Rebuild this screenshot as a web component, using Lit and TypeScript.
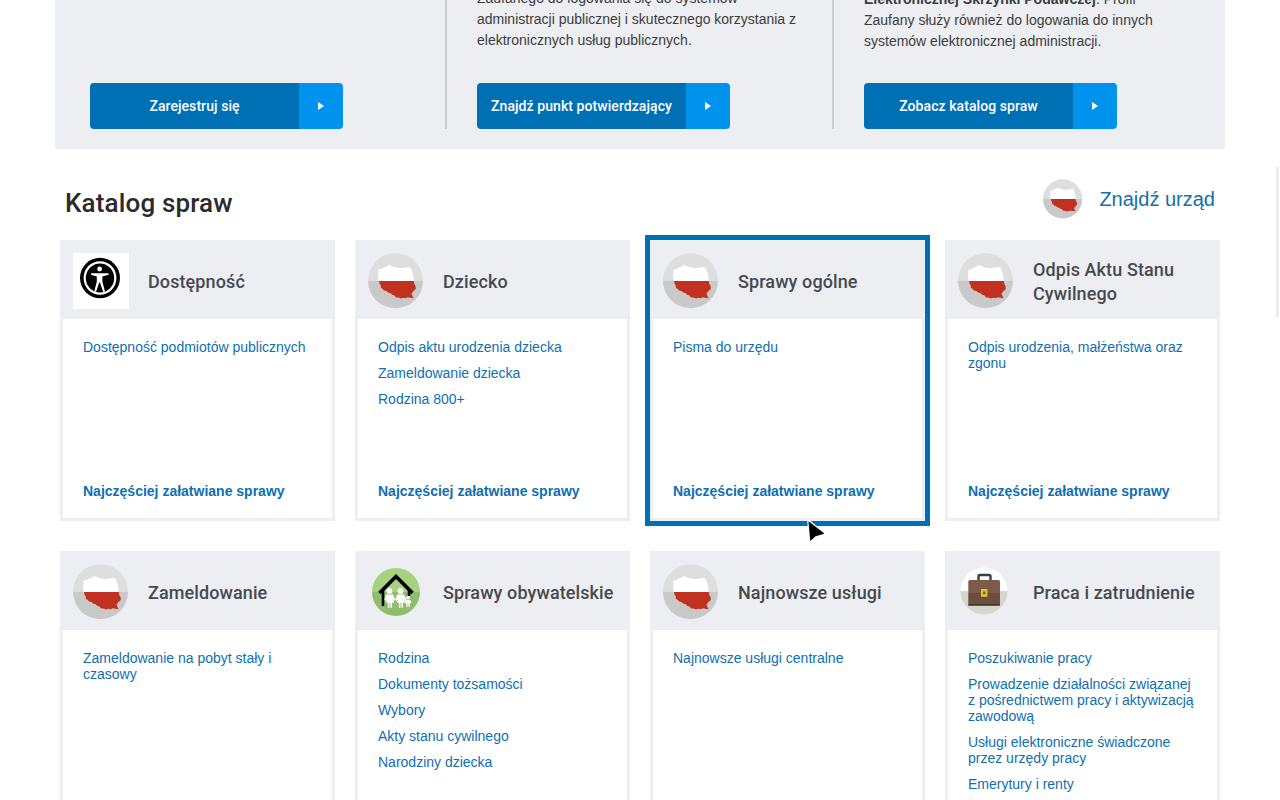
import { html, svg, css, LitElement } from "lit";
import { customElement } from "lit/decorators.js";

const polandIcon = () => html`
  <svg class="icon" viewBox="0 0 56 56">
    <path d="M0 27.700a27.500 27.500 0 0 1 55 0z" fill="#dedede" />
    <path d="M0 27.700a27.500 27.500 0 0 0 55 0z" fill="#c9c9c9" />
    <path
      fill="#fff"
      d="M10.300 16.700L13.500 16 15.500 14.800 18.500 13.500 21.300 12 23 12.800 25.300 14 28.500 14.600 32 15.300 35.500 14.700 39 14.200 42 14 43.400 17 44.600 20 45 23 45.600 25.500 45.800 28H11L10.300 25.500 9.900 23 10.400 20z"
    />
    <path
      fill="#c0321f"
      d="M11 28H45.800L46.300 31 47.600 33 47.800 36 45.500 38 43.500 40.500 44.500 43 45.500 45.300 42.500 44.800 39.500 44.200 38 45.200 35.500 44.800 33 45.600 30.500 44.600 28 44.600 26.500 42.400 24 41.800 22.800 40.200 20 39.400 18.500 38 16 37.400 14.500 35.800 13 35 12.600 32 11.500 30.500z"
    />
  </svg>
`;

const accessIcon = () => html`
  <svg class="icon" viewBox="0 0 56 56">
    <rect width="56" height="56" fill="#fff" />
    <ellipse cx="27" cy="25" rx="20" ry="20.300" fill="#000" />
    <ellipse cx="27" cy="25" rx="16.400" ry="16.800" fill="#fff" />
    <ellipse cx="27" cy="25" rx="14.200" ry="14.600" fill="#000" />
    <circle cx="26.600" cy="16" r="2.400" fill="#fff" />
    <path
      fill="#fff"
      d="M18 20.200h17.600v1.600l-6.200 1.600v5.400l2.600 9.800-1.800.4-3.200-9.400h-.8l-3.200 9.400-1.800-.4 2.600-9.800v-5.400L18 21.800z"
    />
  </svg>
`;

const familyIcon = () => html`
  <svg class="icon" viewBox="0 0 56 56">
    <path d="M4 28a24 24 0 0 1 48 0z" fill="#a6d17f" />
    <path d="M4 28a24 24 0 0 0 48 0z" fill="#8fbd6d" />
    <path d="M11.500 29L28 12.500 44.500 29" fill="none" stroke="#000" stroke-width="3.600" />
    <path d="M15 26v16M41 26v6" fill="none" stroke="#000" stroke-width="2.600" />
    ${[21.5, 32.5].map(
      (x) => svg`
        <circle cx=${x} cy="27" r="2.900" fill="#fff" />
        <path
          fill="#fff"
          d="M${x - 3.5} 30.500h7l2.600 5.500-1.600.8-1-2 1 4h-2v5h-1.500v-5h-1v5h-1.500v-5h-2l1-4-1 2-1.600-.8z"
        />
      `
    )}
    <circle cx="40" cy="33.500" r="1.800" fill="#fff" />
    <path fill="#fff" d="M37.800 35.800h4.400l1.400 3-1 .5-.8-1.300v5h-1.300v-3h-.9v3h-1.300v-5l-.8 1.300-1-.5z" />
  </svg>
`;

const caseIcon = () => html`
  <svg class="icon" viewBox="0 0 56 56">
    <path d="M2.500 27a23.500 23.500 0 0 1 47 0z" fill="#fff" />
    <path d="M2.500 27a23.500 23.500 0 0 0 47 0z" fill="#d6d6cc" />
    <path d="M20.500 16v-3.500q0-1.500 1.500-1.500h9q1.500 0 1.500 1.500V16" fill="none" stroke="#34414c" stroke-width="2.400" />
    <path d="M10.300 17.500q0-1.500 1.500-1.500h28.700q1.500 0 1.500 1.500V29H10.300z" fill="#7b5c49" />
    <path d="M10.300 29H42v11q0 1.500-1.500 1.500H11.800q-1.500 0-1.500-1.500z" fill="#6b4e3b" />
    <rect x="10.300" y="40" width="31.700" height="1.600" fill="#3d3733" />
    <rect x="23" y="25" width="6.400" height="7.800" fill="#e2c327" />
    <rect x="25" y="27.500" width="2.400" height="2.800" fill="#7b5c49" />
  </svg>
`;

type Category = {
  title: string;
  icon: () => unknown;
  links: string[];
  active?: boolean;
};

const CATEGORIES: Category[] = [
  { title: "Dostępność", icon: accessIcon, links: ["Dostępność podmiotów publicznych"] },
  {
    title: "Dziecko",
    icon: polandIcon,
    links: ["Odpis aktu urodzenia dziecka", "Zameldowanie dziecka", "Rodzina 800+"],
  },
  { title: "Sprawy ogólne", icon: polandIcon, links: ["Pisma do urzędu"], active: true },
  {
    title: "Odpis Aktu Stanu Cywilnego",
    icon: polandIcon,
    links: ["Odpis urodzenia, małżeństwa oraz zgonu"],
  },
  { title: "Zameldowanie", icon: polandIcon, links: ["Zameldowanie na pobyt stały i czasowy"] },
  {
    title: "Sprawy obywatelskie",
    icon: familyIcon,
    links: ["Rodzina", "Dokumenty tożsamości", "Wybory", "Akty stanu cywilnego", "Narodziny dziecka"],
  },
  { title: "Najnowsze usługi", icon: polandIcon, links: ["Najnowsze usługi centralne"] },
  {
    title: "Praca i zatrudnienie",
    icon: caseIcon,
    links: [
      "Poszukiwanie pracy",
      "Prowadzenie działalności związanej z pośrednictwem pracy i aktywizacją zawodową",
      "Usługi elektroniczne świadczone przez urzędy pracy",
      "Emerytury i renty",
    ],
  },
];

@customElement("app-root")
export class AppRoot extends LitElement {
  static styles = css`
    :host {
      display: block;
      position: relative;
      width: 1280px;
      height: 800px;
      overflow: hidden;
      background: #fff;
      font-family: "Liberation Sans", Arial, sans-serif;
      font-size: 14px;
      color: #3c3c3c;
    }

    a {
      color: #0f6fb0;
      text-decoration: none;
    }

    .page {
      margin: 0 55px;
    }

    .hero {
      display: grid;
      grid-template-columns: 392px 387px 391px;
      height: 149px;
      padding-bottom: 20px;
      box-sizing: border-box;
      background: #eceef2;
      overflow: hidden;
    }

    .col {
      display: flex;
      flex-direction: column;
      justify-content: flex-end;
      align-items: flex-start;
      min-height: 0;
      padding-left: 30px;
      border-right: 2px solid #cdced1;
      box-sizing: border-box;
    }

    .col:first-child {
      padding-left: 35px;
    }

    .col:last-child {
      border-right: none;
    }

    .col p {
      margin: 0 0 32px;
      width: 325px;
      line-height: 21px;
    }

    .col.low p {
      margin-bottom: 31px;
    }

    .btn {
      display: flex;
      flex: none;
      width: 253px;
      height: 46px;
      border-radius: 4px;
      overflow: hidden;
      font-family: Roboto, sans-serif;
      font-weight: 500;
      font-size: 14px;
      letter-spacing: 0.07px;
      color: #fff;
    }

    .btn-label {
      flex: 1;
      display: flex;
      align-items: center;
      justify-content: center;
      background: #0070b5;
    }

    .btn-arrow {
      flex: none;
      width: 44px;
      display: flex;
      align-items: center;
      justify-content: center;
      background: #0093ee;
    }

    .heading-row {
      display: flex;
      justify-content: space-between;
      align-items: flex-start;
      padding: 30px 10px 21px;
    }

    h2 {
      margin: 9px 0 0;
      font-family: Roboto, sans-serif;
      font-weight: 500;
      font-size: 26px;
      line-height: 30px;
      letter-spacing: 0.15px;
      color: #2b2b2b;
    }

    .find {
      display: flex;
      align-items: center;
      gap: 16px;
      font-size: 20px;
    }

    .find .icon {
      width: 40px;
      height: 40px;
    }

    .grid {
      display: grid;
      grid-template-columns: repeat(4, 275px);
      grid-template-rows: 281px 340px;
      gap: 30px 20px;
      margin: 0 5px;
    }

    .card {
      display: flex;
      flex-direction: column;
      border: 3px solid #eceef2;
      border-top: none;
      box-sizing: border-box;
    }

    .card.active {
      outline: 5px solid #0070b5;
    }

    .card-head {
      flex: none;
      display: flex;
      align-items: center;
      gap: 19px;
      height: 79px;
      padding: 2px 0 0 10px;
      box-sizing: border-box;
      background: #eceef2;
    }

    .icon {
      flex: none;
      display: block;
      width: 56px;
      height: 56px;
    }

    .card-title {
      padding-top: 2px;
      font-family: Roboto, sans-serif;
      font-weight: 500;
      font-size: 18px;
      line-height: 24px;
      letter-spacing: 0.1px;
      color: #464a50;
    }

    .card-body {
      flex: 1;
      display: flex;
      flex-direction: column;
      min-height: 0;
      padding: 20px 20px 19px;
      line-height: 16px;
    }

    .links {
      display: flex;
      flex-direction: column;
      gap: 10px;
    }

    .more {
      margin-top: auto;
      font-weight: 700;
    }

    .scroll-thumb {
      position: absolute;
      top: 167px;
      left: 1276px;
      width: 3px;
      height: 150px;
      background: #ececec;
    }

    .cursor {
      position: absolute;
      top: 519px;
      left: 806px;
      width: 21px;
      height: 25px;
    }
  `;

  private renderButton(label: string) {
    return html`
      <a class="btn" href="#">
        <span class="btn-label">${label}</span>
        <span class="btn-arrow">
          <svg width="6" height="8" viewBox="0 0 6 8"><path d="M0 0l6 4-6 4z" fill="#fff" /></svg>
        </span>
      </a>
    `;
  }

  private renderCard(c: Category) {
    return html`
      <article class="card ${c.active ? "active" : ""}">
        <header class="card-head">
          ${c.icon()}
          <span class="card-title">${c.title}</span>
        </header>
        <div class="card-body">
          <div class="links">${c.links.map((l) => html`<a href="#">${l}</a>`)}</div>
          <a class="more" href="#">Najczęściej załatwiane sprawy</a>
        </div>
      </article>
    `;
  }

  render() {
    return html`
      <div class="page">
        <section class="hero">
          <div class="col">${this.renderButton("Zarejestruj się")}</div>
          <div class="col">
            <p>
              Zaufanego do logowania się do systemów administracji publicznej i skutecznego
              korzystania z elektronicznych usług publicznych.
            </p>
            ${this.renderButton("Znajdź punkt potwierdzający")}
          </div>
          <div class="col low">
            <p>
              <b>Elektronicznej Skrzynki Podawczej</b>. Profil Zaufany służy również do logowania do
              innych systemów elektronicznej administracji.
            </p>
            ${this.renderButton("Zobacz katalog spraw")}
          </div>
        </section>

        <div class="heading-row">
          <h2>Katalog spraw</h2>
          <a class="find" href="#">${polandIcon()}<span>Znajdź urząd</span></a>
        </div>

        <div class="grid">${CATEGORIES.map((c) => this.renderCard(c))}</div>
      </div>

      <div class="scroll-thumb"></div>
      <svg class="cursor" viewBox="0 0 21 25">
        <path
          d="M2.300 1.700L4 22.800 9.800 17.800 19 14.800z"
          fill="#000"
          stroke="#fff"
          stroke-width="2.200"
          stroke-linejoin="round"
        />
        <path d="M2.800 2.700L4.500 21.500 9.500 17 18 14.500z" fill="#000" stroke="#000" stroke-width="0.600" stroke-linejoin="round" />
      </svg>
    `;
  }
}
